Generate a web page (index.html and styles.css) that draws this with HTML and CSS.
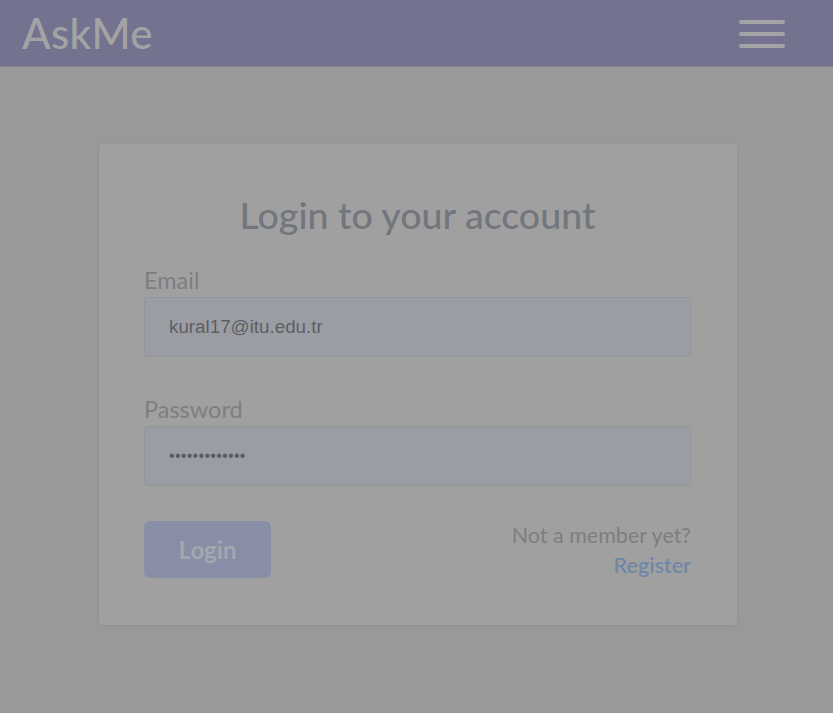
FILE: index.html
```html
<!DOCTYPE html>
<html>
<head>
<meta charset="utf-8">
<link rel="stylesheet" href="styles.css">
</head>
<body>
<header class="topbar">
  <div class="brand">AskMe</div>
  <button class="burger" aria-label="menu"><span></span><span></span><span></span></button>
</header>
<main class="page">
  <section class="card">
    <h1 class="title">Login to your account</h1>
    <div class="field">
      <label class="label">Email</label>
      <div class="input">kural17@itu.edu.tr</div>
    </div>
    <div class="field last">
      <label class="label">Password</label>
      <div class="input pw">•••••••••••••</div>
    </div>
    <div class="actions">
      <button class="login">Login</button>
      <div class="member">
        <div class="member-q">Not a member yet?</div>
        <a class="register">Register</a>
      </div>
    </div>
  </section>
</main>
</body>
</html>
```
FILE: styles.css
```css
html, body { margin: 0; padding: 0; }
body {
  background: #999999;
  font-family: "Lato", "Open Sans", sans-serif;
  width: 833px;
  height: 713px;
  overflow: hidden;
}
.topbar {
  height: 66px;
  background: #737390;
  border-bottom: 1px solid #86868e;
  display: flex;
  align-items: center;
  justify-content: space-between;
  padding: 0 48px 0 22px;
}
.brand {
  font-size: 42px;
  color: #a3a3a5;
  font-weight: 500;
  letter-spacing: 0.3px;
  margin-top: -1px;
}
.burger {
  background: none;
  border: 0;
  padding: 0;
  display: flex;
  flex-direction: column;
  gap: 8px;
  margin-top: 1px;
}
.burger span {
  display: block;
  width: 46px;
  height: 4px;
  border-radius: 2px;
  background: #a4a4a6;
}
.page {
  display: flex;
  justify-content: center;
  padding-top: 77px;
  padding-left: 3px;
}
.card {
  width: 638px;
  box-sizing: border-box;
  background: #a0a0a0;
  border-radius: 4px;
  box-shadow: 0 1px 3px rgba(0,0,0,0.08);
  padding: 47px 46px 45px 45px;
}
.title {
  margin: 0 0 27px;
  text-align: center;
  font-size: 37.5px;
  font-weight: 500;
  color: #72767d;
  line-height: 48px;
}
.field { margin-bottom: 38px; }
.field.last { margin-bottom: 35px; }
.label {
  display: block;
  font-size: 23.5px;
  color: #7e7e80;
  line-height: 28px;
  margin-bottom: 3px;
}
.input {
  height: 58px;
  border: 1px solid #93959b;
  border-radius: 3px;
  background: #9b9da4;
  font-family: "Liberation Sans", Arial, sans-serif;
  font-size: 18.8px;
  color: #5d5f63;
  display: flex;
  align-items: center;
  padding-left: 24px;
}
.input.pw { font-size: 16px; letter-spacing: 0.3px; color: #5a5c60; }
.actions {
  display: flex;
  justify-content: space-between;
  align-items: flex-start;
}
.login {
  width: 127px;
  height: 57px;
  border: 0;
  border-radius: 6px;
  background: #878ea6;
  color: #a4a7ae;
  font-family: "Lato", sans-serif;
  font-size: 24px;
  font-weight: 700;
}
.member {
  text-align: right;
  margin-top: -1px;
}
.member-q {
  font-size: 21.5px;
  color: #7e7e80;
  line-height: 30px;
}
.register {
  display: block;
  font-size: 21.5px;
  color: #7088a6;
  font-weight: 600;
  line-height: 30px;
}
```
